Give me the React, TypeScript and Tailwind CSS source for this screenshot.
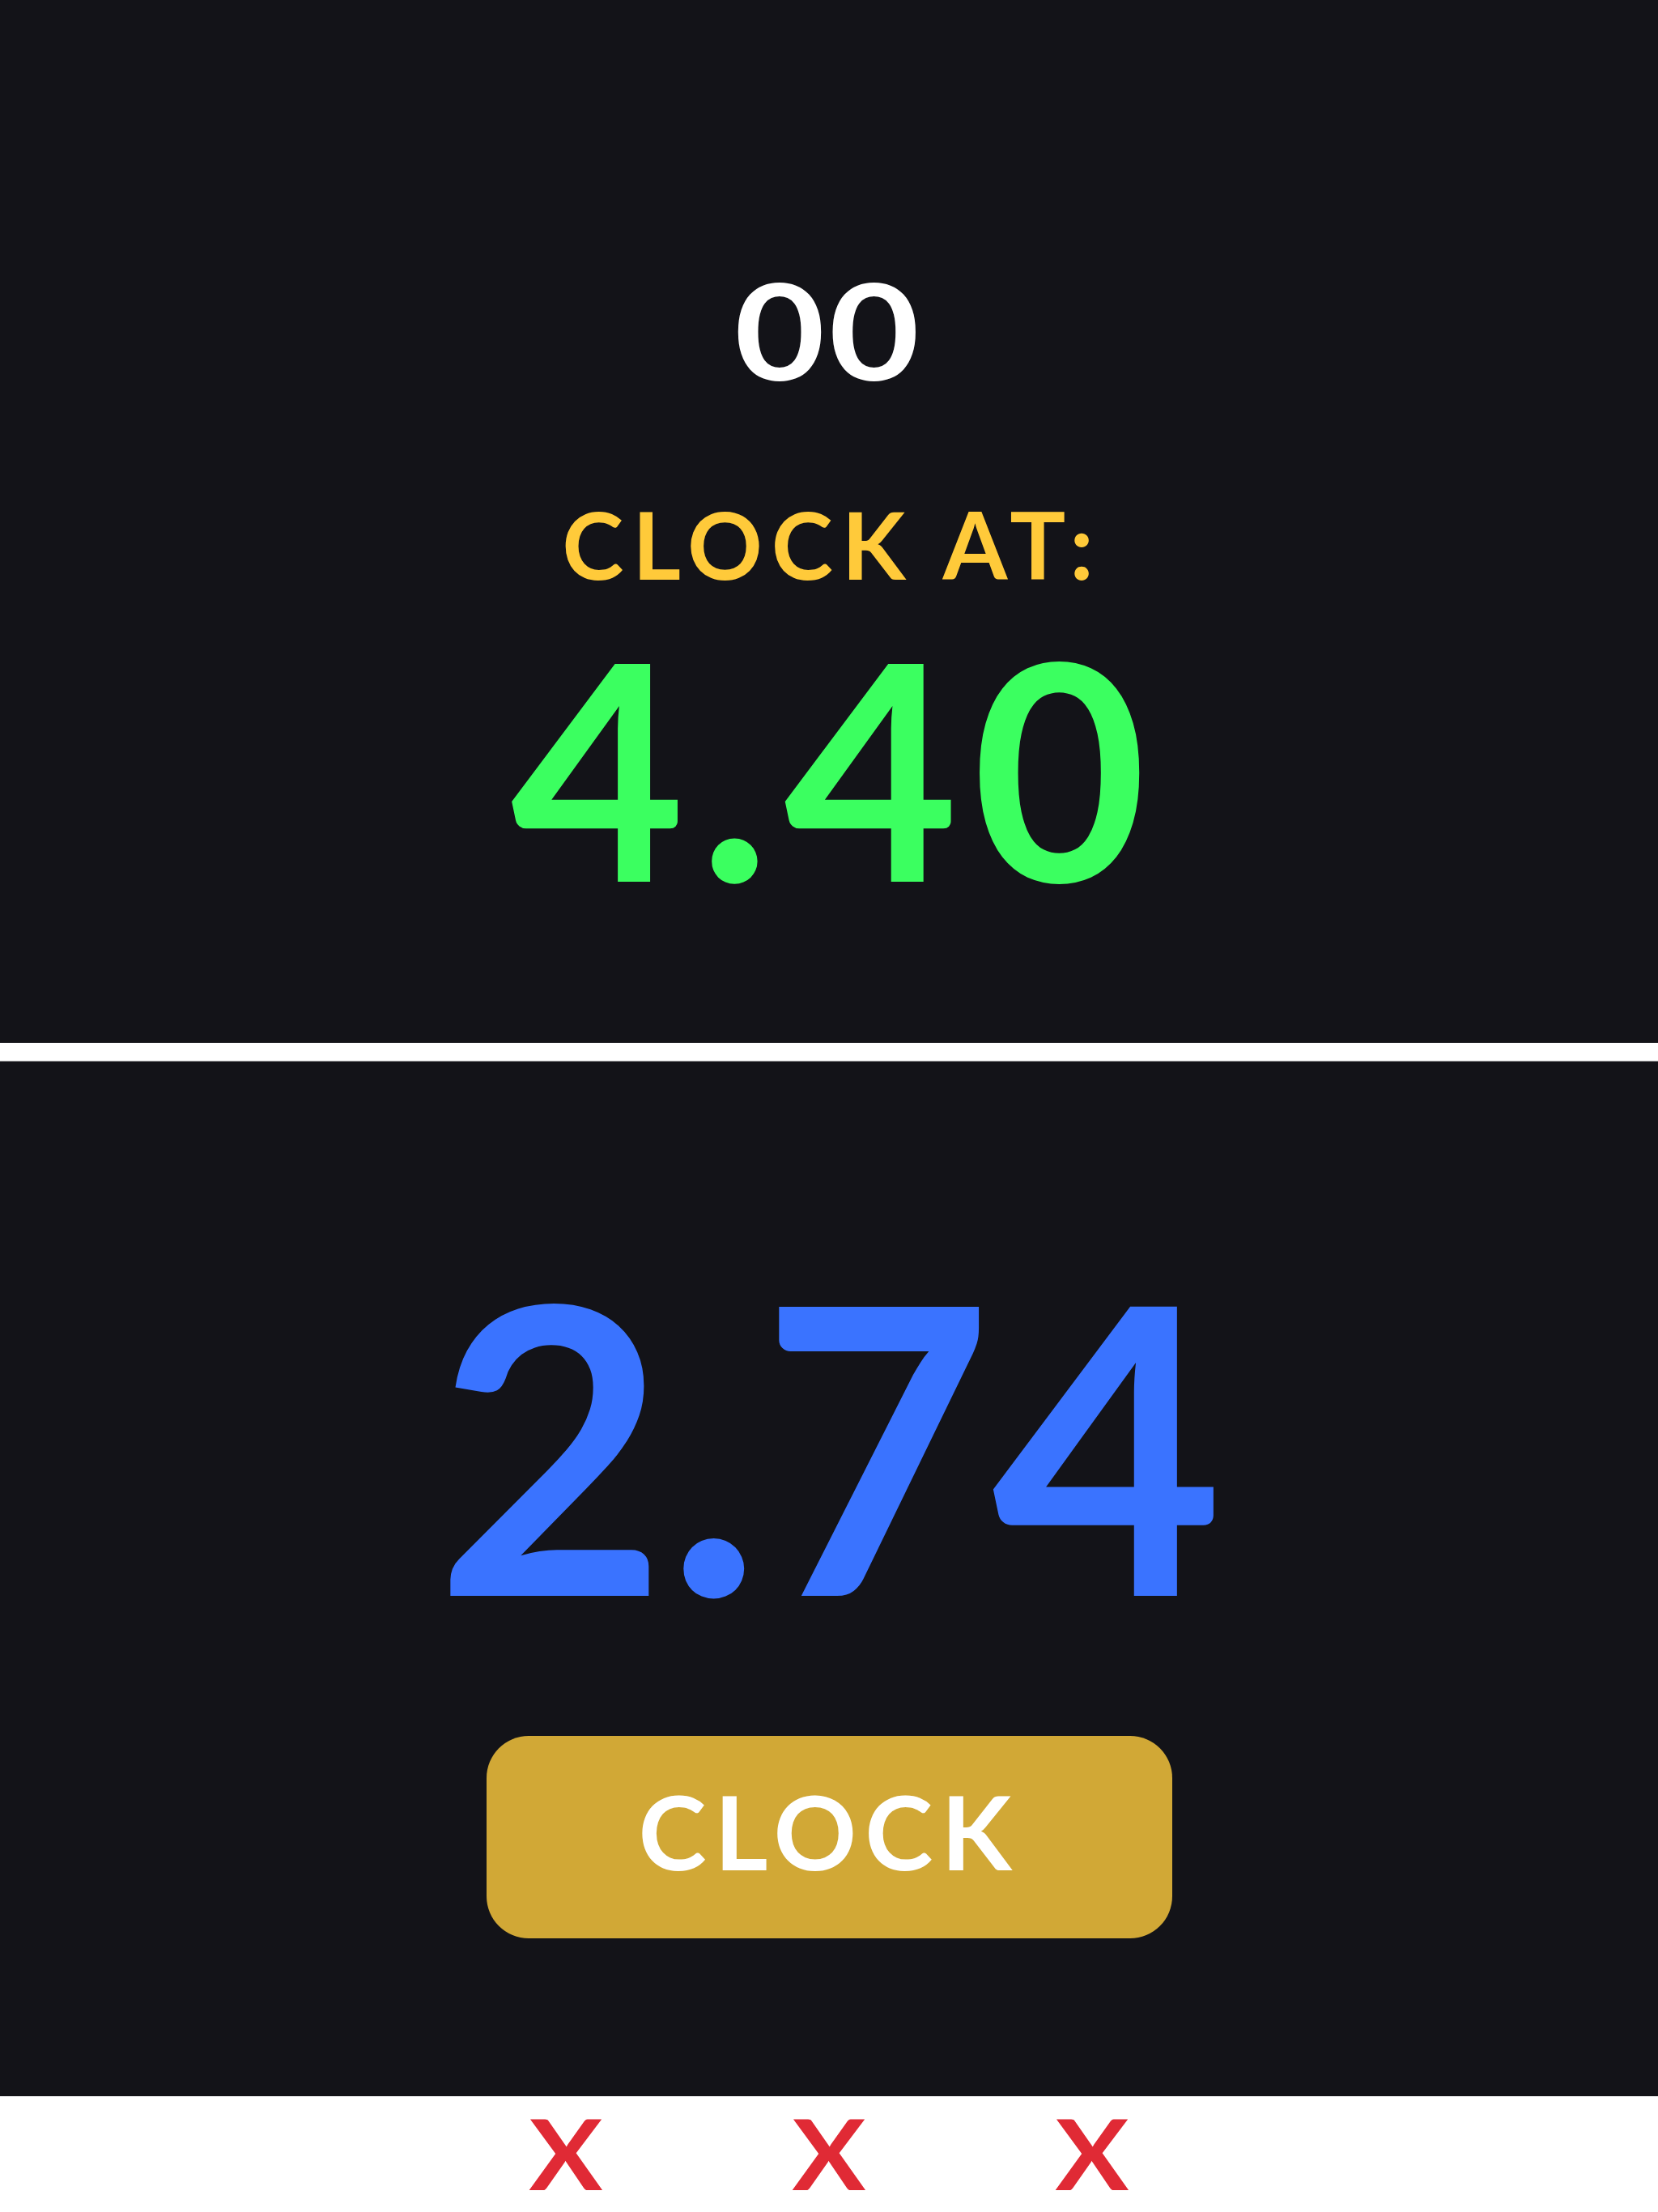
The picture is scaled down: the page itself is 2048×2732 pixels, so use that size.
import React from 'react';

const font = { fontFamily: 'Lato, "Open Sans", sans-serif' };

function Scoreboard() {
  return (
    <div className="flex h-[1288px] flex-col items-center bg-[#131318] pt-[324px]">
      <div className="scale-x-[1.17] text-[165px] font-bold leading-none tracking-[0.025em] text-white">00</div>
      <div className="mt-[125px] ml-[8px] text-[115px] font-bold uppercase leading-none tracking-[0.095em] text-[#ffca3a]">
        Clock at:
      </div>
      <div className="mt-[30px] ml-[16px] text-[372px] font-bold leading-none tracking-[0.045em] text-[#3bff60]">
        4.40
      </div>
    </div>
  );
}

function Timer() {
  return (
    <div className="flex h-[1278px] flex-col items-center bg-[#131318] pt-[222px]">
      <div className="text-[494px] font-bold leading-none tracking-[-0.002em] text-[#3a73ff]">2.74</div>
      <button className="mt-[117px] flex h-[250px] w-[847px] items-center justify-center rounded-[52px] bg-[#d1a836]">
        <span className="mb-[16px] text-[127px] font-bold uppercase leading-none tracking-[0.08em] text-white">
          Clock
        </span>
      </button>
    </div>
  );
}

function Strikes() {
  return (
    <div className="flex h-[143px] items-center justify-center gap-[235px] bg-white pb-[4px]">
      {[0, 1, 2].map((i) => (
        <span
          key={i}
          className="w-[90px] scale-x-[1.12] text-center text-[121px] font-bold leading-none text-[#e02a35]"
        >
          X
        </span>
      ))}
    </div>
  );
}

export default function App() {
  return (
    <div className="w-[2048px]" style={font}>
      <Scoreboard />
      <div className="h-[23px] border-b border-[#bdbdbd] bg-white" />
      <Timer />
      <Strikes />
    </div>
  );
}
